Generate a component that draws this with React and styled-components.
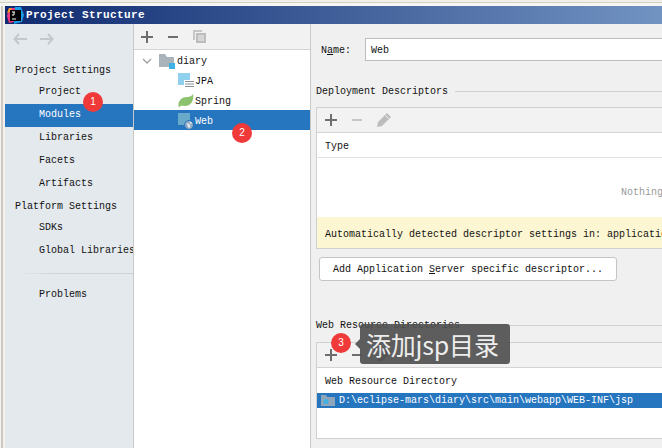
import React from "react";
import styled, { createGlobalStyle } from "styled-components";

const GlobalStyle = createGlobalStyle`
  html, body {
    margin: 0;
    width: 662px;
    height: 448px;
    overflow: hidden;
    background: #efeee8;
  }
  * { box-sizing: border-box; }
`;

const Page = styled.div`
  position: relative;
  width: 662px;
  height: 448px;
  overflow: hidden;
  padding-left: 5px;
  background: linear-gradient(90deg, #f4f4f0 0 1px, #cdc9c2 1px 3px, #f2f1ec 3px);
  font-family: "Liberation Mono", "Noto Sans CJK SC", monospace;
  font-size: 10px;
  color: #111;
`;

const TopEdge = styled.div`
  height: 6px;
  margin-left: -5px;
  background: linear-gradient(#f0efe8 0 2px, #d2cfc6 2px 3px, #f7f6f2 3px);
`;

const TitleBar = styled.div`
  height: 18px;
  display: flex;
  align-items: center;
  gap: 2px;
  padding-left: 2px;
  background: linear-gradient(90deg, #0f2a70, #7193c2);
  color: #fff;
  font-weight: bold;
  font-size: 11px;
  letter-spacing: 0.4px;
`;

const Body = styled.div`
  height: 424px;
  display: grid;
  grid-template-columns: 129px 177px 351px;
`;

const Sidebar = styled.nav`
  background: #e4e9ed;
  border-right: 1px solid #c8c8c8;
  padding-top: 1px;
`;

const NavArrows = styled.div`
  height: 28px;
  display: flex;
  align-items: center;
  gap: 13px;
  padding-left: 8px;
`;

const NavHeading = styled.div`
  height: ${(p) => p.$h}px;
  margin-top: ${(p) => p.$top || 0}px;
  padding: ${(p) => p.$shift || 0}px 0 0 10px;
  line-height: ${(p) => p.$h}px;
`;

const NavItem = styled.div`
  height: 23px;
  line-height: 22px;
  padding-left: 34px;
  white-space: nowrap;
  overflow: hidden;
  background: ${(p) => (p.$active ? "#2675bf" : "transparent")};
  color: ${(p) => (p.$active ? "#fff" : "#111")};
`;

const NavRule = styled.hr`
  height: 1px;
  border: 0;
  margin: 10px 0 10px 12px;
  background: linear-gradient(90deg, #e4e9ed, #cfd3d6 30%);
`;

const TreePanel = styled.section`
  background: #fff;
  border-right: 1px solid #c8c8c8;
`;

const Toolbar = styled.div`
  height: ${(p) => p.$h || 25}px;
  flex: none;
  display: flex;
  align-items: center;
  gap: 14px;
  padding-left: ${(p) => p.$pad || 7}px;
  background: #f2f2f2;
  border-bottom: 1px solid #d4d4d4;
`;

const TreeRow = styled.div`
  height: 20px;
  display: flex;
  align-items: center;
  gap: ${(p) => p.$gap || 1}px;
  padding: 2px 0 0 ${(p) => p.$indent}px;
  background: ${(p) => (p.$active ? "#2675bf" : "transparent")};
  color: ${(p) => (p.$active ? "#fff" : "#111")};
`;

const Twisty = styled.span`
  width: 15px;
  display: flex;
`;

const Content = styled.section`
  background: #f0f0f0;
  padding-left: 5px;
  overflow: hidden;
`;

const NameRow = styled.div`
  height: 23px;
  margin-top: 14px;
  display: flex;
  align-items: center;
  padding-left: 5px;
  gap: 14px;
`;

const NameLabel = styled.span`
  padding-top: 2px;
`;

const Underlined = styled.span`
  text-decoration: underline;
`;

const NameInput = styled.div`
  flex: 1;
  height: 23px;
  line-height: 24px;
  padding-left: 5px;
  background: #fff;
  border: 1px solid #bdbdbd;
  border-right: 0;
`;

const GroupTitle = styled.div`
  height: 12px;
  margin-top: ${(p) => p.$top}px;
  display: flex;
  align-items: center;
  gap: 7px;
  white-space: nowrap;
  &::after {
    content: "";
    flex: 1;
    height: 1px;
    background: #d0d0d0;
  }
`;

const Panel = styled.div`
  width: 360px;
  height: ${(p) => p.$h}px;
  margin-top: ${(p) => p.$top}px;
  display: flex;
  flex-direction: column;
  background: #fff;
  border: 1px solid #d0d0d0;
  border-right: 0;
`;

const ColumnHead = styled.div`
  height: ${(p) => p.$h}px;
  flex: none;
  padding: 7px 0 0 8px;
  line-height: 14px;
  border-bottom: ${(p) => (p.$rule ? "1px solid #e2e2e2" : "0")};
`;

const EmptyArea = styled.div`
  flex: 1;
  padding: 29px 0 0 304px;
  color: #9a9a9a;
  white-space: nowrap;
`;

const Notice = styled.div`
  height: 31px;
  padding: 11px 0 0 8px;
  line-height: 14px;
  background: #fdf6d2;
  white-space: nowrap;
`;

const AddButton = styled.button`
  display: block;
  width: 298px;
  height: 24px;
  margin: 8px 0 0 3px;
  padding: 0 0 0 13px;
  text-align: left;
  font: inherit;
  color: inherit;
  background: #fff;
  border: 1px solid #c4c4c4;
  border-radius: 3px;
`;

const DirRow = styled.div`
  height: 15px;
  flex: none;
  display: flex;
  align-items: center;
  gap: 4px;
  padding-left: 4px;
  background: #2675bf;
  color: #fff;
  white-space: nowrap;
`;

const Badge = styled.span`
  position: absolute;
  left: ${(p) => p.$x - 10}px;
  top: ${(p) => p.$y - 10}px;
  width: 20px;
  height: 20px;
  border-radius: 50%;
  background: #f03a3a;
  color: #fff;
  font: 10px/20px "Liberation Sans", sans-serif;
  text-align: center;
`;

const Tooltip = styled.div`
  position: absolute;
  left: 360px;
  top: 324px;
  width: 150px;
  height: 40px;
  padding-left: 6px;
  border-radius: 3px;
  background: rgba(80, 80, 80, 0.92);
  color: #eee;
  font: 25px/40px "Noto Sans CJK SC", "Liberation Sans", sans-serif;
  letter-spacing: -0.2px;
  white-space: nowrap;
  &::before {
    content: "";
    position: absolute;
    left: -5px;
    top: 15px;
    border: 5px solid transparent;
    border-left: 0;
    border-right-color: rgba(80, 80, 80, 0.92);
  }
`;

const Plus = ({ color = "#6e6e6e" }) => (
  <svg width="12" height="12" viewBox="0 0 12 12">
    <path d="M5 0h2v5h5v2H7v5H5V7H0V5h5z" fill={color} />
  </svg>
);

const Minus = ({ color = "#6e6e6e" }) => (
  <svg width="12" height="12" viewBox="0 0 12 12">
    <path d="M1 5h10v2H1z" fill={color} />
  </svg>
);

const CopyIcon = () => (
  <svg width="13" height="13" viewBox="0 0 13 13">
    <path d="M0 0h9v2H2v8H0z" fill="#c6c6c6" />
    <path d="M3 3h10v10H3z" fill="#bdbdbd" />
    <path d="M5 6h6M5 8h6M5 10h6" stroke="#eee" />
  </svg>
);

const Pencil = ({ color = "#bdbdbd" }) => (
  <svg width="14" height="14" viewBox="0 0 14 14">
    <path d="M10 0l4 4-9 9-5 1 1-5z" fill={color} />
    <path d="M8.500 2.500l3 3" stroke="#f2f2f2" />
  </svg>
);

const Help = () => (
  <svg width="12" height="12" viewBox="0 0 12 12">
    <path d="M3 4c0-4 6-4 6 0 0 2-3 2-3 5" fill="none" stroke="#6e6e6e" strokeWidth="2" />
    <path d="M5 10h2v2H5z" fill="#6e6e6e" />
  </svg>
);

const Arrow = ({ flip }) => (
  <svg width="14" height="12" viewBox="0 0 14 12" style={flip ? { transform: "scaleX(-1)" } : undefined}>
    <path d="M6 1L1.500 6 6 11M2 6h12" fill="none" stroke="#c4c8cc" strokeWidth="2" />
  </svg>
);

const Chevron = () => (
  <svg width="10" height="6" viewBox="0 0 10 6">
    <path d="M1 1l4 4 4-4" fill="none" stroke="#a0a0a0" strokeWidth="1.3" />
  </svg>
);

const ModuleFolder = () => (
  <svg width="16" height="16" viewBox="0 0 16 16">
    <path d="M0 1h6l2 3h7v10H0z" fill="#aab2ba" />
    <path d="M10 10h6v6h-6z" fill="#3fb2e4" />
  </svg>
);

const JpaIcon = () => (
  <svg width="16" height="16" viewBox="0 0 16 16">
    <path d="M0 0h12v12H0z" fill="#8fd0ee" />
    <path d="M6 7h10v9H6z" fill="#fff" />
    <path d="M7 8.500h9M7 11h9M7 13.500h9" stroke="#8a9299" />
  </svg>
);

const Leaf = () => (
  <svg width="16" height="14" viewBox="0 0 16 14">
    <path d="M15 0c1 7-2 12-8 12-3 0-5-1-6 2C-1 8 3 3 9 3c3 0 5-1 6-3z" fill="#8cc26e" />
  </svg>
);

const WebIcon = () => (
  <svg width="16" height="16" viewBox="0 0 16 16">
    <path d="M0 0h12v12H0z" fill="#69a9c9" />
    <circle cx="11" cy="12" r="4.500" fill="#8fa8c0" stroke="#2675bf" />
    <path d="M8.500 10l3 1 1 3-2 1zM11 8.500l3 1-1 2z" fill="#dfe8f0" />
  </svg>
);

const SourceFolder = () => (
  <svg width="14" height="11" viewBox="0 0 14 11">
    <path d="M0 0h5l1 2h8v9H0z" fill="#8fa6ba" />
    <circle cx="5" cy="6.500" r="2.500" fill="#3fb2e4" />
  </svg>
);

const AppLogo = () => (
  <svg width="17" height="17" viewBox="0 0 17 17">
    <path d="M2 1h6L7 15l-5 1-2-7z" fill="#f0377f" />
    <path d="M2 1h3L3 5 0 6z" fill="#f59a2c" />
    <path d="M8 0h6l3 8-2 7-8 2z" fill="#1c9be8" />
    <path d="M3 3h11v11H3z" fill="#000" />
    <path d="M5 5h3M7 5v3H5M5 12h4" fill="none" stroke="#fff" />
  </svg>
);

export default function App() {
  return (
    <Page>
      <GlobalStyle />
      <TopEdge />
      <TitleBar>
        <AppLogo />
        Project Structure
      </TitleBar>
      <Body>
        <Sidebar>
          <NavArrows>
            <Arrow />
            <Arrow flip />
          </NavArrows>
          <NavHeading $h={23} $top={5} $shift={1}>Project Settings</NavHeading>
          <NavItem>Project</NavItem>
          <NavItem $active>Modules</NavItem>
          <NavItem>Libraries</NavItem>
          <NavItem>Facets</NavItem>
          <NavItem>Artifacts</NavItem>
          <NavHeading $h={21}>Platform Settings</NavHeading>
          <NavItem>SDKs</NavItem>
          <NavItem>Global Libraries</NavItem>
          <NavRule />
          <NavItem>Problems</NavItem>
        </Sidebar>
        <TreePanel>
          <Toolbar $h={26}>
            <Plus />
            <Minus />
            <CopyIcon />
          </Toolbar>
          <TreeRow $indent={8} $gap={2}>
            <Twisty>
              <Chevron />
            </Twisty>
            <ModuleFolder />
            diary
          </TreeRow>
          <TreeRow $indent={44}>
            <JpaIcon />
            JPA
          </TreeRow>
          <TreeRow $indent={44}>
            <Leaf />
            Spring
          </TreeRow>
          <TreeRow $indent={44} $active>
            <WebIcon />
            Web
          </TreeRow>
        </TreePanel>
        <Content>
          <NameRow>
            <NameLabel>
              N<Underlined>a</Underlined>me:
            </NameLabel>
            <NameInput>Web</NameInput>
          </NameRow>
          <GroupTitle $top={24}>Deployment Descriptors</GroupTitle>
          <Panel $h={142} $top={10}>
            <Toolbar $pad={8}>
              <Plus />
              <Minus color="#c6c6c6" />
              <Pencil />
            </Toolbar>
            <ColumnHead $h={25} $rule>Type</ColumnHead>
            <EmptyArea>Nothing to show</EmptyArea>
            <Notice>Automatically detected descriptor settings in: application</Notice>
          </Panel>
          <AddButton>
            Add Application <Underlined>S</Underlined>erver specific descriptor...
          </AddButton>
          <GroupTitle $top={38}>Web Resource Directories</GroupTitle>
          <Panel $h={97} $top={11}>
            <Toolbar $pad={8}>
              <Plus />
              <Minus />
              <Pencil color="#6e6e6e" />
              <Help />
            </Toolbar>
            <ColumnHead $h={25}>Web Resource Directory</ColumnHead>
            <DirRow>
              <SourceFolder />
              D:\eclipse-mars\diary\src\main\webapp\WEB-INF\jsp
            </DirRow>
          </Panel>
        </Content>
      </Body>
      <Badge $x={93} $y={102}>1</Badge>
      <Badge $x={242} $y={133}>2</Badge>
      <Badge $x={341} $y={343}>3</Badge>
      <Tooltip>添加jsp目录</Tooltip>
    </Page>
  );
}
